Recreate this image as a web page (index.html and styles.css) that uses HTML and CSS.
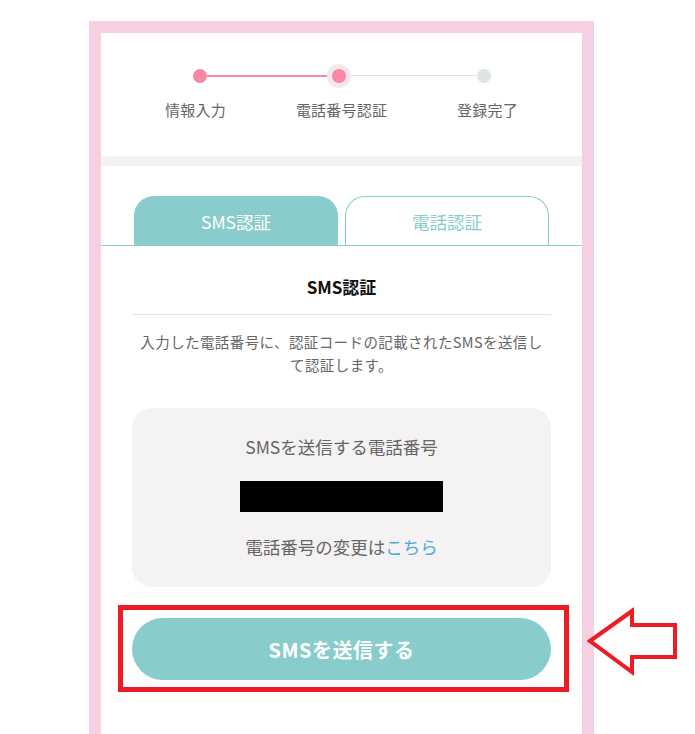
FILE: index.html
```html
<!DOCTYPE html>
<html lang="ja">
<head>
<meta charset="utf-8">
<title>SMS認証</title>
<link rel="stylesheet" href="styles.css">
</head>
<body>
<div class="frame">
  <section class="steps">
    <div class="dots">
      <span class="dot done"></span>
      <span class="line done"></span>
      <span class="dot current"></span>
      <span class="line todo"></span>
      <span class="dot todo"></span>
    </div>
    <div class="labels">
      <span class="label">情報入力</span>
      <span class="label">電話番号認証</span>
      <span class="label">登録完了</span>
    </div>
  </section>
  <div class="band"></div>
  <section class="auth">
    <div class="tabs">
      <div class="tab active">SMS認証</div>
      <div class="tab">電話認証</div>
    </div>
    <div class="content">
      <h2 class="heading">SMS認証</h2>
      <p class="desc">入力した電話番号に、認証コードの記載されたSMSを送信して認証します。</p>
      <div class="phone-box">
        <p class="phone-title">SMSを送信する電話番号</p>
        <div class="redacted"></div>
        <p class="phone-change">電話番号の変更は<a class="link" href="#">こちら</a></p>
      </div>
      <div class="button-wrap">
        <button class="send-button" type="button">SMSを送信する</button>
        <div class="annot-box"></div>
        <svg class="annot-arrow" width="94" height="70" viewBox="0 0 94 70" aria-hidden="true">
          <polygon points="4,34 46,4 46,18 89,18 89,50 46,50 46,65" fill="none" stroke="#ed1c24" stroke-width="4" stroke-linejoin="miter"/>
        </svg>
      </div>
    </div>
  </section>
</div>
</body>
</html>
```
FILE: styles.css
```css
* { box-sizing: border-box; }
html, body { margin: 0; padding: 0; background: #ffffff; }
body {
  font-family: "Noto Sans CJK JP", "Noto Sans", sans-serif;
  color: #666666;
  width: 695px;
  height: 734px;
  overflow: hidden;
}
.frame {
  margin: 21px 0 0 89px;
  width: 505px;
  border: 12px solid #f7cfe2;
  border-bottom: none;
  background: #ffffff;
  min-height: 760px;
}
.steps {
  padding: 35.5px 0 36px;
}
.dots {
  display: flex;
  align-items: center;
  width: 298px;
  margin: 0 auto;
}
.dot {
  width: 14px;
  height: 14px;
  border-radius: 50%;
  flex: 0 0 14px;
  background: #fb87a6;
}
.dot.current { box-shadow: 0 0 0 5px #f4e8ec; }
.dot.todo {
  background: #dde4e4;
}
.line {
  flex: 1 1 auto;
  height: 2px;
}
.line.done { background: #f58aa9; }
.line.todo {
  height: 1px;
  background: #e3e3e3;
  margin-left: 5px;
}
.labels {
  display: grid;
  grid-template-columns: repeat(3, 146px);
  justify-content: center;
  margin-top: 17.5px;
}
.label {
  text-align: center;
  font-size: 15px;
  line-height: 20px;
  color: #666666;
  letter-spacing: 0.2px;
  white-space: nowrap;
}
.band {
  height: 10px;
  background: #f4f2f3;
}
.auth {
  padding-top: 30px;
}
.tabs {
  display: flex;
  justify-content: center;
  gap: 7px;
  border-bottom: 1px solid #88cccb;
}
.tab {
  width: 204px;
  height: 49px;
  border: 1px solid #88cccb;
  border-bottom: none;
  border-radius: 20px 20px 0 0;
  display: flex;
  align-items: center;
  justify-content: center;
  font-size: 17.5px;
  color: #88cccb;
  background: #ffffff;
}
.tab.active {
  background: #88cccb;
  color: #ffffff;
}
.content {
  padding: 0 31px 60px;
}
.heading {
  margin: 0;
  padding: 29px 0 15px;
  border-bottom: 1px solid #dce5e5;
  text-align: center;
  font-size: 17px;
  line-height: 24px;
  font-weight: 700;
  color: #111111;
}
.desc {
  margin: 14.5px 0 0;
  padding: 0 6px;
  text-align: center;
  font-size: 14.5px;
  line-height: 23px;
  letter-spacing: 0.4px;
  color: #666666;
}
.phone-box {
  margin-top: 32.5px;
  background: #f4f2f3;
  border-radius: 20px;
  padding: 26px 0 27px;
  display: flex;
  flex-direction: column;
  align-items: center;
}
.phone-title, .phone-change {
  margin: 0;
  font-size: 17.5px;
  line-height: 26px;
  color: #666666;
}
.redacted {
  width: 203px;
  height: 31px;
  background: #000000;
  margin: 21px 0 22px;
}
.link {
  color: #4fa8d8;
  text-decoration: none;
}
.button-wrap {
  position: relative;
  margin-top: 31px;
}
.send-button {
  display: block;
  width: 100%;
  height: 62px;
  border: none;
  border-radius: 31px;
  background: #88cccb;
  color: #ffffff;
  font-family: "Noto Sans CJK JP", "Noto Sans", sans-serif;
  font-size: 20px;
  font-weight: 700;
  letter-spacing: 0.5px;
  padding: 0;
}
.annot-box {
  position: absolute;
  left: -14px;
  top: -13px;
  width: 451px;
  height: 87px;
  border: 5px solid #ed1c24;
}
.annot-arrow {
  position: absolute;
  left: 454px;
  top: -11px;
}
```
